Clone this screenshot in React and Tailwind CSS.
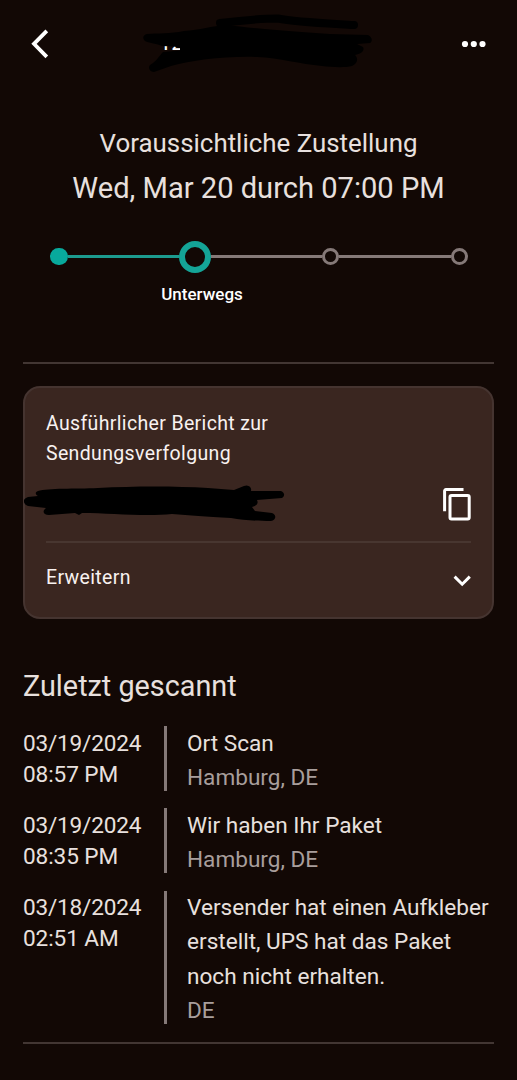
import React, { useState } from "react";

const scans = [
  {
    date: "03/19/2024",
    time: "08:57 PM",
    lines: ["Ort Scan"],
    place: "Hamburg, DE",
  },
  {
    date: "03/19/2024",
    time: "08:35 PM",
    lines: ["Wir haben Ihr Paket"],
    place: "Hamburg, DE",
  },
  {
    date: "03/18/2024",
    time: "02:51 AM",
    lines: ["Versender hat einen Aufkleber", "erstellt, UPS hat das Paket", "noch nicht erhalten."],
    place: "DE",
  },
];

function Header() {
  return (
    <header className="relative flex h-[87px] items-center justify-between pl-[31px] pr-[30px]">
      <button type="button" aria-label="Zurück">
        <svg width="18" height="30" viewBox="0 0 18 30" fill="none" className="block">
          <path d="M15.8 1.8L3 14.8L15.8 27.8" stroke="#fff" strokeWidth="3.8" />
        </svg>
      </button>

      {/* Scribbled-out tracking number */}
      <div className="absolute left-[159px] top-[30px] text-[22px] leading-[26px] text-white">12</div>
      <svg
        width="236"
        height="66"
        viewBox="140 10 236 66"
        className="absolute left-[140px] top-[10px]"
        fill="none"
        stroke="#000"
        strokeLinecap="round"
        strokeLinejoin="round"
      >
        <path
          d="M147 34C158 33 170 34 184 31C200 30 212 26 226 25C250 28 285 31 330 34L368 35C372 37 373 41 370 43L357 44L363 47C365 51 361 54 355 55C359 59 357 64 352 66C344 68 331 67 322 66C300 64 280 58 257 57C225 56 193 60 171 66L154 72C149 72 148 67 150 65C157 61 159 56 163 52L180 50.5L180 48L174 46.5L162 46C155 43 149 43 145 41C142 38 143 35 147 34Z"
          fill="#000"
          stroke="none"
        />
        <path d="M220 23C245 20 262 18.5 278 18.5C295 22 320 23 354 25" strokeWidth="8" />
      </svg>

      <button type="button" aria-label="Mehr">
        <svg width="26" height="8" viewBox="0 0 26 8" fill="#fff" className="block">
          <circle cx="4" cy="4" r="3.1" />
          <circle cx="12.8" cy="4" r="3.1" />
          <circle cx="21.5" cy="4" r="3.1" />
        </svg>
      </button>
    </header>
  );
}

function Progress() {
  return (
    <div className="ml-[50px] mr-[49px] mt-[32px]">
      <div className="flex h-[33px] items-center">
        <span className="size-[17.5px] rounded-full bg-[#08a99c]"></span>
        <span className="h-[3px] w-[111px] bg-[#1c9b8f]"></span>
        <span className="size-8 rounded-full border-6 border-[#14a497]"></span>
        <span className="h-[3px] flex-1 bg-[#857978]"></span>
        <span className="size-[17px] rounded-full border-3 border-[#857978]"></span>
        <span className="h-[3px] w-[112px] bg-[#857978]"></span>
        <span className="size-[17px] rounded-full border-3 border-[#857978]"></span>
      </div>
      <p className="ml-[96px] mt-[11px] w-[112px] text-center text-[17px] font-medium leading-5 text-white">
        Unterwegs
      </p>
    </div>
  );
}

function TrackingCard() {
  const [expanded, setExpanded] = useState(false);

  return (
    <section className="mt-[22px] h-[233px] rounded-[17px] border-2 border-[#453430] bg-[#3a2620] px-[21px] pt-[21px]">
      <h2 className="text-[19.5px] leading-[29.5px] tracking-[0.35px] text-[#f8f2f0]">
        Ausführlicher Bericht zur
        <br />
        Sendungsverfolgung
      </h2>
      <div className="relative flex h-[73px] items-center justify-end">
        <svg
          width="262"
          height="40"
          viewBox="24 484 262 40"
          className="absolute -left-[22px] top-[16px]"
          fill="#000"
        >
          <path d="M38 491C48 488 75 489 98 488C135 486 175 486 208 488L234 490L244 486C249 484 252 488 251 491L281 491C285 493 285 496 282 498L257 500C259 504 256 506 252 507L255 511L272 513C277 515 276 520 271 521C255 521 243 520 231 518C205 517 190 515 172 514C145 517 110 513 82 513L79 515L75 513L49 515C43 515 42 511 46 508L28 506C23 504 22 499 28 497L38 496C35 494 35 492 38 491Z" />
        </svg>
        <button type="button" aria-label="Kopieren" className="-mt-[2px]">
          <svg width="28" height="34" viewBox="0 0 28 34" fill="none" stroke="#fff" strokeWidth="3" className="block">
            <path d="M1.6 24.3V4Q1.6 2.6 3 2.6H20.5" />
            <rect x="7" y="8.6" width="19.2" height="23.5" rx="1.5" />
          </svg>
        </button>
      </div>
      <button
        type="button"
        onClick={() => setExpanded(!expanded)}
        className="flex h-[71px] w-full items-center justify-between border-t-2 border-[#483630] text-[19.5px] tracking-[0.35px] text-[#f8f2f0]"
      >
        Erweitern
        <svg width="18" height="12" viewBox="0 0 18 12" fill="none" className="mt-[6px]">
          <path d="M1.6 1.6L9.2 9.2L16.8 1.6" stroke="#fff" strokeWidth="3" />
        </svg>
      </button>
    </section>
  );
}

function ScanRow({ scan }) {
  return (
    <li className="flex">
      <div className="mt-[2.5px] w-[141px] text-[22.6px] leading-[31px]">
        <p className="tracking-[-0.2px]">{scan.date}</p>
        <p className="tracking-[-0.1px]">{scan.time}</p>
      </div>
      <div className="mb-[3px] mt-[1px] w-[3px] bg-[#857978]"></div>
      <div className="ml-[20px] whitespace-nowrap text-[22.6px] leading-[34.3px]">
        {/* nudged onto the date's baseline */}
        <div className="relative top-[1.5px]">
          {scan.lines.map((line) => (
            <p key={line}>{line}</p>
          ))}
          <p className="text-[#a89e9c]">{scan.place}</p>
        </div>
      </div>
    </li>
  );
}

export default function App() {
  return (
    <div className="h-[1080px] w-[517px] overflow-hidden bg-[#120805] font-['Roboto',sans-serif] text-[#e8e0de]">
      <Header />

      <div className="pt-[38px] text-center">
        <h1 className="text-[25.9px] leading-9">Voraussichtliche Zustellung</h1>
        <p className="mt-[7px] text-[29.1px] leading-10">Wed, Mar 20 durch 07:00 PM</p>
      </div>
      <Progress />

      <main className="mx-[23px] mt-[58px] border-t-2 border-[#423633]">
        <TrackingCard />
        <h2 className="mt-[47px] text-[28.8px] leading-10">Zuletzt gescannt</h2>
        <ul className="mt-[19px] flex flex-col gap-[13.7px] border-b-2 border-[#423633] pb-[15px]">
          {scans.map((scan) => (
            <ScanRow key={scan.date + scan.time} scan={scan} />
          ))}
        </ul>
      </main>
    </div>
  );
}
